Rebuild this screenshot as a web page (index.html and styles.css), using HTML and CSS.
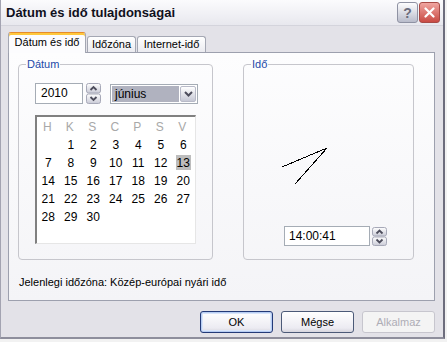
FILE: index.html
```html
<!DOCTYPE html>
<html lang="hu">
<head>
    <meta charset="UTF-8">
    <title>Dátum és idő tulajdonságai</title>
    <link rel="stylesheet" href="styles.css">
</head>
<body>

<div class="window">
    <div class="titlebar">
        <span class="title">Dátum és idő tulajdonságai</span>
        <div class="captionButtons">
            <span class="cap help">?</span>
            <span class="cap close">
                <svg width="11" height="11" viewBox="0 0 11 11">
                    <path d="M1.5 1.5 L9.5 9.5 M9.5 1.5 L1.5 9.5" stroke="#fff" stroke-width="2.2" stroke-linecap="round"/>
                </svg>
            </span>
        </div>
    </div>

    <div class="content">
        <div class="tabs">
            <div class="tab active">Dátum és idő</div>
            <div class="tab">Időzóna</div>
            <div class="tab">Internet-idő</div>
        </div>

        <div class="panel">
            <div class="groups">
                <fieldset class="group dateGroup">
                    <legend>Dátum</legend>
                    <div class="dateControls">
                        <div class="field year">2010</div>
                        <div class="spinner">
                            <svg width="15" height="21" viewBox="0 0 15 21">
                                <defs>
                                    <linearGradient id="spin1" x1="0" y1="0" x2="0" y2="1">
                                        <stop offset="0" stop-color="#ffffff"/>
                                        <stop offset="1" stop-color="#c9cad6"/>
                                    </linearGradient>
                                </defs>
                                <rect x="0.5" y="0.5" width="14" height="9.5" rx="2" fill="url(#spin1)" stroke="#a7a9b8"/>
                                <rect x="0.5" y="11" width="14" height="9.5" rx="2" fill="url(#spin1)" stroke="#a7a9b8"/>
                                <path d="M4.5 7 L7.5 4 L10.5 7" fill="none" stroke="#4d4d5c" stroke-width="1.8"/>
                                <path d="M4.5 14 L7.5 17 L10.5 14" fill="none" stroke="#4d4d5c" stroke-width="1.8"/>
                            </svg>
                        </div>
                        <div class="combo">
                            <span class="comboText">június</span>
                            <span class="comboButton">
                                <svg width="9" height="6" viewBox="0 0 9 6">
                                    <path d="M1 1 L4.5 4.5 L8 1" fill="none" stroke="#4d4d5c" stroke-width="2"/>
                                </svg>
                            </span>
                        </div>
                    </div>

                    <div class="calendar">
                        <div class="weekdays">
                            <span>H</span><span>K</span><span>S</span><span>C</span><span>P</span><span>S</span><span>V</span>
                        </div>
                        <div class="days">
                            <span></span><span>1</span><span>2</span><span>3</span><span>4</span><span>5</span><span>6</span>
                            <span>7</span><span>8</span><span>9</span><span>10</span><span>11</span><span>12</span><span><b class="today">13</b></span>
                            <span>14</span><span>15</span><span>16</span><span>17</span><span>18</span><span>19</span><span>20</span>
                            <span>21</span><span>22</span><span>23</span><span>24</span><span>25</span><span>26</span><span>27</span>
                            <span>28</span><span>29</span><span>30</span>
                        </div>
                    </div>
                </fieldset>

                <fieldset class="group timeGroup">
                    <legend>Idő</legend>
                    <svg class="clock" width="169" height="155" viewBox="0 0 169 155" shape-rendering="crispEdges">
                        <line x1="83" y1="77" x2="38" y2="96" stroke="#000"/>
                        <line x1="83" y1="77" x2="51" y2="113" stroke="#000"/>
                    </svg>
                    <div class="timeRow">
                        <div class="field time">14:00:41</div>
                        <div class="spinner small">
                            <svg width="15" height="19" viewBox="0 0 15 19">
                                <defs>
                                    <linearGradient id="spin2" x1="0" y1="0" x2="0" y2="1">
                                        <stop offset="0" stop-color="#ffffff"/>
                                        <stop offset="1" stop-color="#c9cad6"/>
                                    </linearGradient>
                                </defs>
                                <rect x="0.5" y="0.5" width="14" height="8.5" rx="2" fill="url(#spin2)" stroke="#a7a9b8"/>
                                <rect x="0.5" y="10" width="14" height="8.5" rx="2" fill="url(#spin2)" stroke="#a7a9b8"/>
                                <path d="M4.5 6.5 L7.5 3.5 L10.5 6.5" fill="none" stroke="#4d4d5c" stroke-width="1.8"/>
                                <path d="M4.5 12.5 L7.5 15.5 L10.5 12.5" fill="none" stroke="#4d4d5c" stroke-width="1.8"/>
                            </svg>
                        </div>
                    </div>
                </fieldset>
            </div>

            <div class="zone">Jelenlegi időzóna: Közép-európai nyári idő</div>
        </div>

        <div class="buttons">
            <button class="btn default">OK</button>
            <button class="btn">Mégse</button>
            <button class="btn disabled">Alkalmaz</button>
        </div>
    </div>
</div>

</body>
</html>
```

FILE: styles.css
```css
* {
    box-sizing: border-box;
}
body {
    margin: 0;
    padding: 0;
    font-family: "Liberation Sans", Arial, sans-serif;
    font-size: 11px;
    color: #000;
    background: #f2f2f2;
    overflow: hidden;
}
.window {
    width: 445px;
    height: 339px;
    background: #e3e2e8;
    border-left: 1px solid #a3a3b1;
    border-right: 2px solid #6d6d7d;
    border-bottom: 2px solid #8e8e9c;
}

/* title bar */
.titlebar {
    height: 26px;
    display: flex;
    align-items: center;
    justify-content: space-between;
    padding: 0 3px 0 5px;
    background: linear-gradient(#fbfbfd, #e8e8ee);
    border-bottom: 1px solid #d4d4dc;
}
.title {
    font-size: 13px;
    font-weight: bold;
    color: #10101c;
}
.captionButtons {
    display: flex;
    gap: 1px;
}
.cap {
    width: 21px;
    height: 21px;
    border-radius: 3px;
    display: flex;
    align-items: center;
    justify-content: center;
}
.help {
    background: linear-gradient(#fdfdfe, #b9bccb);
    border: 1px solid #8f92a3;
    color: #6a6c7c;
    font-size: 14px;
    font-weight: bold;
}
.close {
    background: linear-gradient(#f0a5a0, #c94a43);
    border: 1px solid #a84a46;
}

/* tabs */
.content {
    padding: 7px 8px 0 7px;
}
.tabs {
    display: flex;
    align-items: flex-end;
    height: 19px;
}
.tab {
    height: 16px;
    padding: 0;
    line-height: 15px;
    text-align: center;
    white-space: nowrap;
    border: 1px solid #a4a7b3;
    border-bottom: none;
    border-radius: 3px 3px 0 0;
    background: linear-gradient(#ffffff, #ebebf0);
    margin-right: 1px;
}
.tab:nth-child(2) {
    width: 49px;
}
.tab:nth-child(3) {
    width: 69px;
}
.tab.active {
    width: 78px;
    height: 21px;
    margin-bottom: -1px;
    line-height: 18px;
    background: #fcfcfe;
    border-top: 1px solid #e68b2c;
    box-shadow: inset 0 2px 0 #ffc83c;
    z-index: 1;
}

/* panel */
.panel {
    height: 249px;
    border: 1px solid #9da0ae;
    background: linear-gradient(#fdfdfe, #f4f4f7);
    padding: 5px 0 0 9px;
}
.groups {
    display: flex;
    gap: 30px;
}
.group {
    margin: 0;
    padding: 0;
    min-width: 0;
    height: 202px;
    border: 1px solid #c6c6cc;
    border-radius: 4px;
}
.group legend {
    padding: 0 1px;
    margin-left: 7px;
    line-height: 13px;
    color: #1c49a8;
}
.dateGroup {
    width: 195px;
}
.timeGroup {
    width: 171px;
}

.dateControls {
    display: flex;
    align-items: flex-start;
    margin: 12px 0 0 16px;
}
.field {
    background: #fff;
    border: 1px solid #a5acb5;
}
.year {
    width: 48px;
    height: 21px;
    line-height: 19px;
    padding-left: 5px;
    font-size: 12px;
}
.spinner {
    margin-left: 3px;
    height: 21px;
}
.spinner svg {
    display: block;
}
.combo {
    margin: 1px 0 0 9px;
    width: 88px;
    height: 20px;
    display: flex;
    border: 1px solid #a5acb5;
    background: #fff;
    padding: 1px;
}
.comboText {
    flex: 1;
    background: #b0b2bf;
    line-height: 16px;
    padding-left: 3px;
    font-size: 12px;
}
.comboButton {
    width: 16px;
    margin-left: 1px;
    border: 1px solid #b8bac8;
    border-radius: 2px;
    background: linear-gradient(#ffffff, #c6c8d5);
    display: flex;
    align-items: center;
    justify-content: center;
}

/* calendar */
.calendar {
    margin: 11px 0 0 16px;
    width: 161px;
    height: 129px;
    background: #fff;
    border-top: 2px solid #808080;
    border-left: 2px solid #808080;
    border-right: 1px solid #e6e6e6;
    border-bottom: 1px solid #e6e6e6;
    padding: 1px 0 0 0;
    font-size: 12px;
}
.weekdays, .days {
    display: grid;
    grid-template-columns: repeat(7, 22.5px);
}
.weekdays span, .days span {
    height: 18px;
    line-height: 18px;
    text-align: center;
}
.weekdays span {
    color: #a8a8a8;
    padding-right: 2px;
}
.today {
    font-weight: normal;
    background: #bdbdbd;
    padding: 1px 1px 0;
}

/* time */
.clock {
    display: block;
}
.timeRow {
    display: flex;
    margin: 0 0 0 40px;
}
.time {
    width: 86px;
    height: 20px;
    line-height: 18px;
    padding-left: 4px;
    font-size: 12px;
}
.spinner.small {
    margin: 1px 0 0 2px;
}

.zone {
    margin: 16px 0 0 1px;
    line-height: 13px;
}

/* dialog buttons */
.buttons {
    display: flex;
    justify-content: flex-end;
    gap: 8px;
    margin-top: 10px;
}
.btn {
    width: 73px;
    height: 22px;
    font-family: inherit;
    font-size: 11px;
    color: #000;
    border: 1px solid #4c5a78;
    border-radius: 3px;
    background: linear-gradient(#ffffff, #ecebf2 80%, #d6d5de);
    padding: 0;
}
.btn.default {
    border-color: #233a78;
    box-shadow: inset 0 0 0 1px #b7cdf3, inset 0 0 0 2px #d9e5fa;
}
.btn.disabled {
    color: #aeadb6;
    border-color: #c7c6ce;
    background: #f4f4f4;
}
```
